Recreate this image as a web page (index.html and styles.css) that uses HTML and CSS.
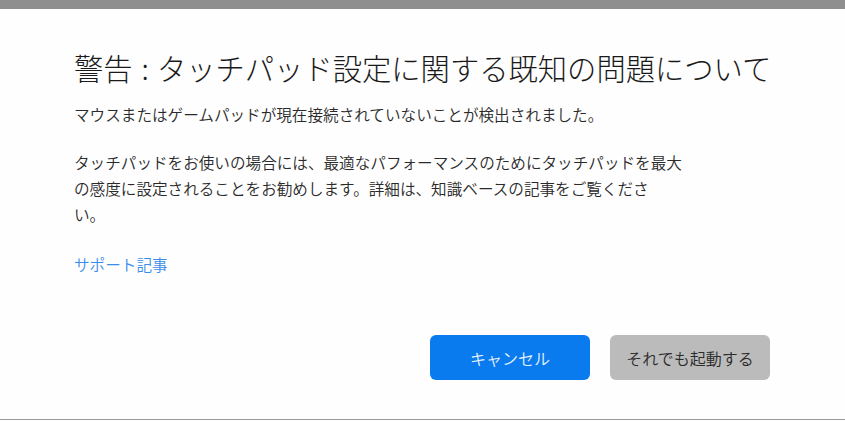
FILE: index.html
```html
<!DOCTYPE html>
<html lang="ja">
<head>
<meta charset="utf-8">
<link rel="stylesheet" href="styles.css">
</head>
<body>
<div class="topbar"></div>
<main class="dialog">
  <h1 class="title">警告<span class="colon">:</span>タッチパッド設定に関する既知の問題について</h1>
  <p class="msg">マウスまたはゲームパッドが現在接続されていないことが検出されました。</p>
  <p class="msg para">タッチパッドをお使いの場合には、最適なパフォーマンスのためにタッチパッドを最大<br>の感度に設定されることをお勧めします。詳細は、知識ベースの記事をご覧くださ<br>い。</p>
  <a class="link" href="#">サポート記事</a>
  <div class="actions">
    <button class="btn primary">キャンセル</button>
    <button class="btn secondary">それでも起動する</button>
  </div>
</main>
<div class="bottomline"></div>
</body>
</html>
```
FILE: styles.css
```css
html, body {
  margin: 0;
  padding: 0;
  background: #fefefe;
}
body {
  width: 845px;
  height: 421px;
  overflow: hidden;
  font-family: "Noto Sans CJK JP", "Noto Sans", sans-serif;
  color: #222;
}
.topbar {
  height: 9px;
  background: #8f8f8f;
}
.dialog {
  display: flex;
  flex-direction: column;
  padding: 38px 75px 0 74px;
  height: 408px;
  box-sizing: border-box;
}
.title {
  margin: 0;
  font-size: 29.3px;
  font-weight: 300;
  line-height: 40px;
  height: 40px;
  color: #1a1a1a;
  white-space: nowrap;
}
.colon {
  padding: 0 8px 0 9px;
}
.msg {
  margin: 14px 0 0;
  font-size: 15.6px;
  line-height: 26px;
  font-weight: 350;
  color: #2a2a2a;
  white-space: nowrap;
}
.para {
  margin-top: 22px;
}
.link {
  margin-top: 24px;
  font-size: 15.6px;
  line-height: 26px;
  font-weight: 350;
  color: #3a8ded;
  text-decoration: none;
  align-self: flex-start;
}
.actions {
  margin-top: auto;
  display: flex;
  justify-content: flex-end;
  gap: 20px;
  padding-bottom: 37px;
}
.btn {
  width: 160px;
  height: 45px;
  border: none;
  border-radius: 6px;
  font-family: "Noto Sans CJK JP", "Noto Sans", sans-serif;
  font-size: 16px;
  font-weight: 350;
  padding: 0;
}
.primary {
  background: #0a7aef;
  color: #e8f2fe;
}
.secondary {
  background: #bbbbbb;
  color: #2a2a2a;
}
.bottomline {
  height: 1px;
  margin-top: 2px;
  background: #9a9a9a;
}
```
